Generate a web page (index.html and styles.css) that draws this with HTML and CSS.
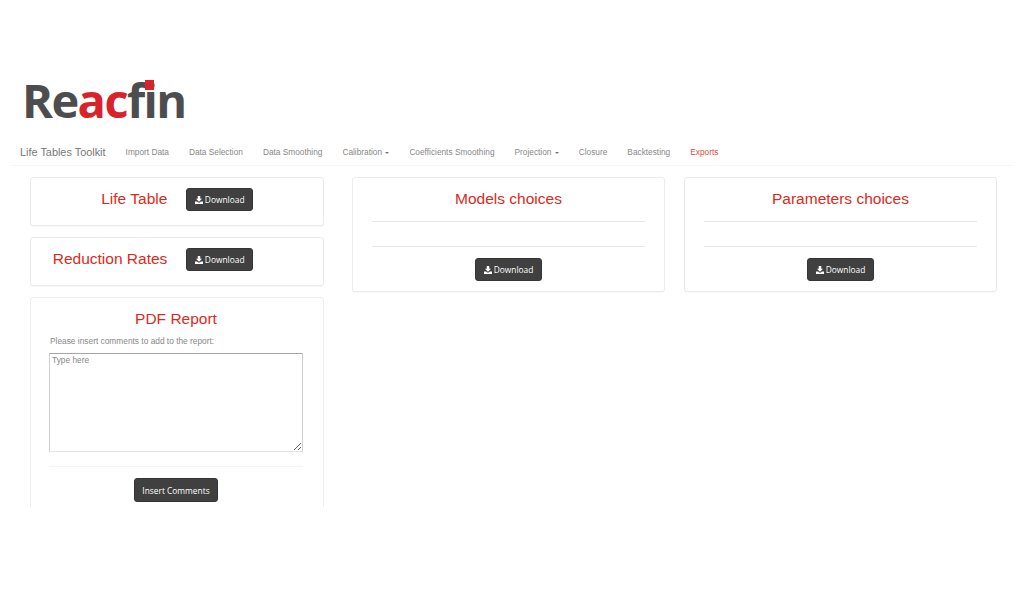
FILE: index.html
```html
<!DOCTYPE html>
<html lang="en">
<head>
    <meta charset="UTF-8">
    <meta name="viewport" content="width=device-width, initial-scale=1.0">
    <title>Life Tables Toolkit</title>
    <link rel="stylesheet" href="styles.css">
</head>
<body>
    <div class="logo">Re<span class="logo-red">ac</span>f<span class="logo-i">i<span class="logo-dot"></span></span>n</div>

    <nav class="navbar">
        <span class="brand">Life Tables Toolkit</span>
        <a href="#">Import Data</a>
        <a href="#">Data Selection</a>
        <a href="#">Data Smoothing</a>
        <a href="#">Calibration <span class="caret"></span></a>
        <a href="#">Coefficients Smoothing</a>
        <a href="#">Projection <span class="caret"></span></a>
        <a href="#">Closure</a>
        <a href="#">Backtesting</a>
        <a href="#" class="active">Exports</a>
    </nav>

    <div class="content">
        <div class="col-left">
            <div class="card card-inline">
                <h3 class="title">Life Table</h3>
                <button class="btn" type="button">
                    <svg class="icon" viewBox="0 0 16 16"><path d="M5.500 0h5v5.500H14L8 11.500 2 5.500h3.500zM0 11h4.200l2 2h3.600l2-2H16v5H0z"/></svg>Download
                </button>
            </div>
            <div class="card card-inline">
                <h3 class="title">Reduction Rates</h3>
                <button class="btn" type="button">
                    <svg class="icon" viewBox="0 0 16 16"><path d="M5.500 0h5v5.500H14L8 11.500 2 5.500h3.500zM0 11h4.200l2 2h3.600l2-2H16v5H0z"/></svg>Download
                </button>
            </div>
            <div class="card card-report">
                <h3 class="title">PDF Report</h3>
                <label class="hint" for="comments">Please insert comments to add to the report:</label>
                <textarea id="comments" placeholder="Type here"></textarea>
                <hr class="rule-light">
                <div class="center">
                    <button class="btn btn-tall" type="button">Insert Comments</button>
                </div>
            </div>
        </div>

        <div class="col-mid">
            <div class="card card-choices">
                <h3 class="title">Models choices</h3>
                <hr>
                <hr class="second">
                <div class="center">
                    <button class="btn" type="button">
                        <svg class="icon" viewBox="0 0 16 16"><path d="M5.500 0h5v5.500H14L8 11.500 2 5.500h3.500zM0 11h4.200l2 2h3.600l2-2H16v5H0z"/></svg>Download
                    </button>
                </div>
            </div>
        </div>

        <div class="col-right">
            <div class="card card-choices">
                <h3 class="title">Parameters choices</h3>
                <hr>
                <hr class="second">
                <div class="center">
                    <button class="btn" type="button">
                        <svg class="icon" viewBox="0 0 16 16"><path d="M5.500 0h5v5.500H14L8 11.500 2 5.500h3.500zM0 11h4.200l2 2h3.600l2-2H16v5H0z"/></svg>Download
                    </button>
                </div>
            </div>
        </div>
    </div>
</body>
</html>
```

FILE: styles.css
```css
body {
    margin: 0;
    background-color: #fff;
    font-family: "Liberation Sans", Arial, sans-serif;
    color: #888;
}

/* logo */
.logo {
    padding: 71px 0 0 22px;
    height: 58px;
    font-family: "Open Sans", sans-serif;
    font-weight: 700;
    font-size: 47px;
    line-height: 58px;
    letter-spacing: -1.600px;
    color: #4d4d4f;
}
.logo-red {
    color: #d8232a;
}
.logo-i {
    position: relative;
}
/* red square sits over the dot of the i */
.logo-dot {
    position: absolute;
    left: 1.500px;
    top: 12px;
    width: 8.500px;
    height: 9.500px;
    background-color: #d8232a;
}

/* navbar */
.navbar {
    display: flex;
    align-items: center;
    gap: 20px;
    height: 26px;
    margin-left: 10px;
    margin-right: 10px;
    padding: 10px 0 0 10px;
    border-bottom: 1px solid #f6f6f6;
    font-size: 8.300px;
}
.navbar a {
    color: #888;
    text-decoration: none;
}
.navbar a.active {
    color: #e0493d;
}
.brand {
    font-size: 10.900px;
    color: #777;
}
.caret {
    display: inline-block;
    width: 0;
    height: 0;
    margin-left: 1px;
    vertical-align: middle;
    border-top: 2px solid #777;
    border-left: 2.500px solid transparent;
    border-right: 2.500px solid transparent;
}

/* columns */
.content {
    display: flex;
    align-items: flex-start;
    height: 330px;
    padding: 11px 0 0 30px;
    overflow: hidden;
}
.col-left {
    width: 294px;
    margin-right: 28px;
}
.col-mid {
    width: 313px;
    margin-right: 19px;
}
.col-right {
    width: 313px;
}

/* cards */
.card {
    box-sizing: border-box;
    background-color: #fff;
    border: 1px solid #ebebeb;
    border-radius: 3px;
    box-shadow: 0 1px 1px rgba(0, 0, 0, 0.03);
}
.card-inline {
    display: flex;
    align-items: center;
    justify-content: flex-end;
    gap: 19px;
    height: 49px;
    margin-bottom: 11px;
    padding: 0 70px 4px 0;
}
.card-inline .title {
    margin-bottom: 2px;
}
.card-report {
    height: 260px;
    padding: 11px 20px 0 18px;
    box-shadow: none;
    border-color: #eeeeee;
}
.card-choices {
    height: 115px;
    padding: 11px 19px 0 19px;
}

.title {
    margin: 0;
    font-size: 15.500px;
    font-weight: 400;
    line-height: 19px;
    text-align: center;
    color: #db2a1c;
}

hr {
    margin: 13px 0 0;
    border: 0;
    border-top: 1px solid #e6e6e6;
}
hr.second {
    margin-top: 24px;
}
.rule-light {
    margin-top: 14px;
    border-top-color: #f5f5f5;
}
.center {
    text-align: center;
}
.card-choices .center {
    margin-top: 11px;
}
.card-report .center {
    margin-top: 11px;
}

/* buttons */
.btn {
    box-sizing: border-box;
    height: 23px;
    padding: 0 7.500px;
    background-color: #404040;
    border: 1px solid #353535;
    border-radius: 3px;
    font-family: "Open Sans", sans-serif;
    font-size: 8.400px;
    color: #fff;
}
.btn-tall {
    height: 24px;
    padding: 0 7px;
}
.icon {
    width: 8px;
    height: 8px;
    margin-right: 2px;
    vertical-align: -1px;
    fill: #fff;
}

/* report form */
.hint {
    display: block;
    margin: 7px 0 0 1px;
    font-size: 8.350px;
    line-height: 12px;
    color: #888;
}
textarea {
    display: block;
    box-sizing: border-box;
    width: 254px;
    height: 99px;
    margin-top: 6px;
    padding: 1px 2px;
    border: 1px solid #e4e4e4;
    border-left-color: #cfcfcf;
    border-right-color: #cfcfcf;
    border-top-color: #a6a6a6;
    font-family: "Liberation Sans", Arial, sans-serif;
    font-size: 8.350px;
}
textarea::placeholder {
    color: #888;
}
```
